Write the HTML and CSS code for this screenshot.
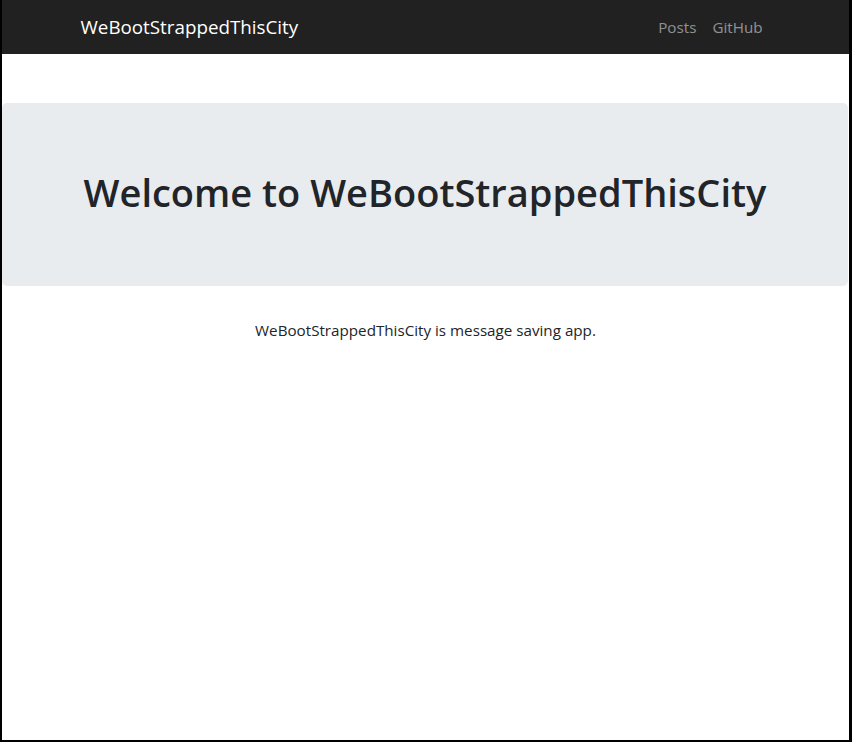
FILE: index.html
```html
<!DOCTYPE html>
<html lang="en">
<head>
<meta charset="utf-8">
<title>WeBootStrappedThisCity</title>
<link rel="stylesheet" href="styles.css">
</head>
<body>
<div class="frame">
  <nav class="navbar">
    <div class="container nav-inner">
      <a class="brand" href="#">WeBootStrappedThisCity</a>
      <div class="nav-links">
        <a class="nav-link" href="#">Posts</a>
        <a class="nav-link" href="#">GitHub</a>
      </div>
    </div>
  </nav>
  <main>
    <div class="jumbotron">
      <h1 class="title">Welcome to WeBootStrappedThisCity</h1>
    </div>
    <p class="lead-text">WeBootStrappedThisCity is message saving app.</p>
  </main>
</div>
</body>
</html>
```

FILE: styles.css
```css
* { box-sizing: border-box; }
html, body { margin: 0; padding: 0; }
body {
  font-family: "Open Sans", "Noto Sans", sans-serif;
  font-size: 15.2px;
  line-height: 1.5;
  color: #212529;
  background: #fff;
}
.frame {
  height: 742px;
  border-left: 2px solid #000;
  border-right: 3px solid #000;
  border-bottom: 2px solid #000;
  overflow: hidden;
}
.navbar {
  background: #212121;
  height: 54px;
  display: flex;
  align-items: center;
}
.container {
  width: 720px;
  margin: 0 auto;
  padding: 0 15px;
}
.nav-inner {
  display: flex;
  align-items: center;
  justify-content: space-between;
}
.brand {
  color: #fff;
  text-decoration: none;
  font-size: 18.8px;
  line-height: 30px;
}
.nav-links { display: flex; }
.nav-link {
  color: rgba(255,255,255,.5);
  text-decoration: none;
  padding: 0 8px;
}
main { padding-top: 49px; }
.jumbotron {
  background: #e9ecef;
  border-radius: 5px;
  height: 183px;
  margin-right: 1px;
  display: flex;
  align-items: center;
  justify-content: center;
  margin-bottom: 32px;
}
.title {
  margin: 0 0 4px;
  font-size: 38px;
  font-weight: 600;
  line-height: 1.2;
}
.lead-text {
  margin: 0;
  padding-top: 1px;
  text-align: center;
}
```
